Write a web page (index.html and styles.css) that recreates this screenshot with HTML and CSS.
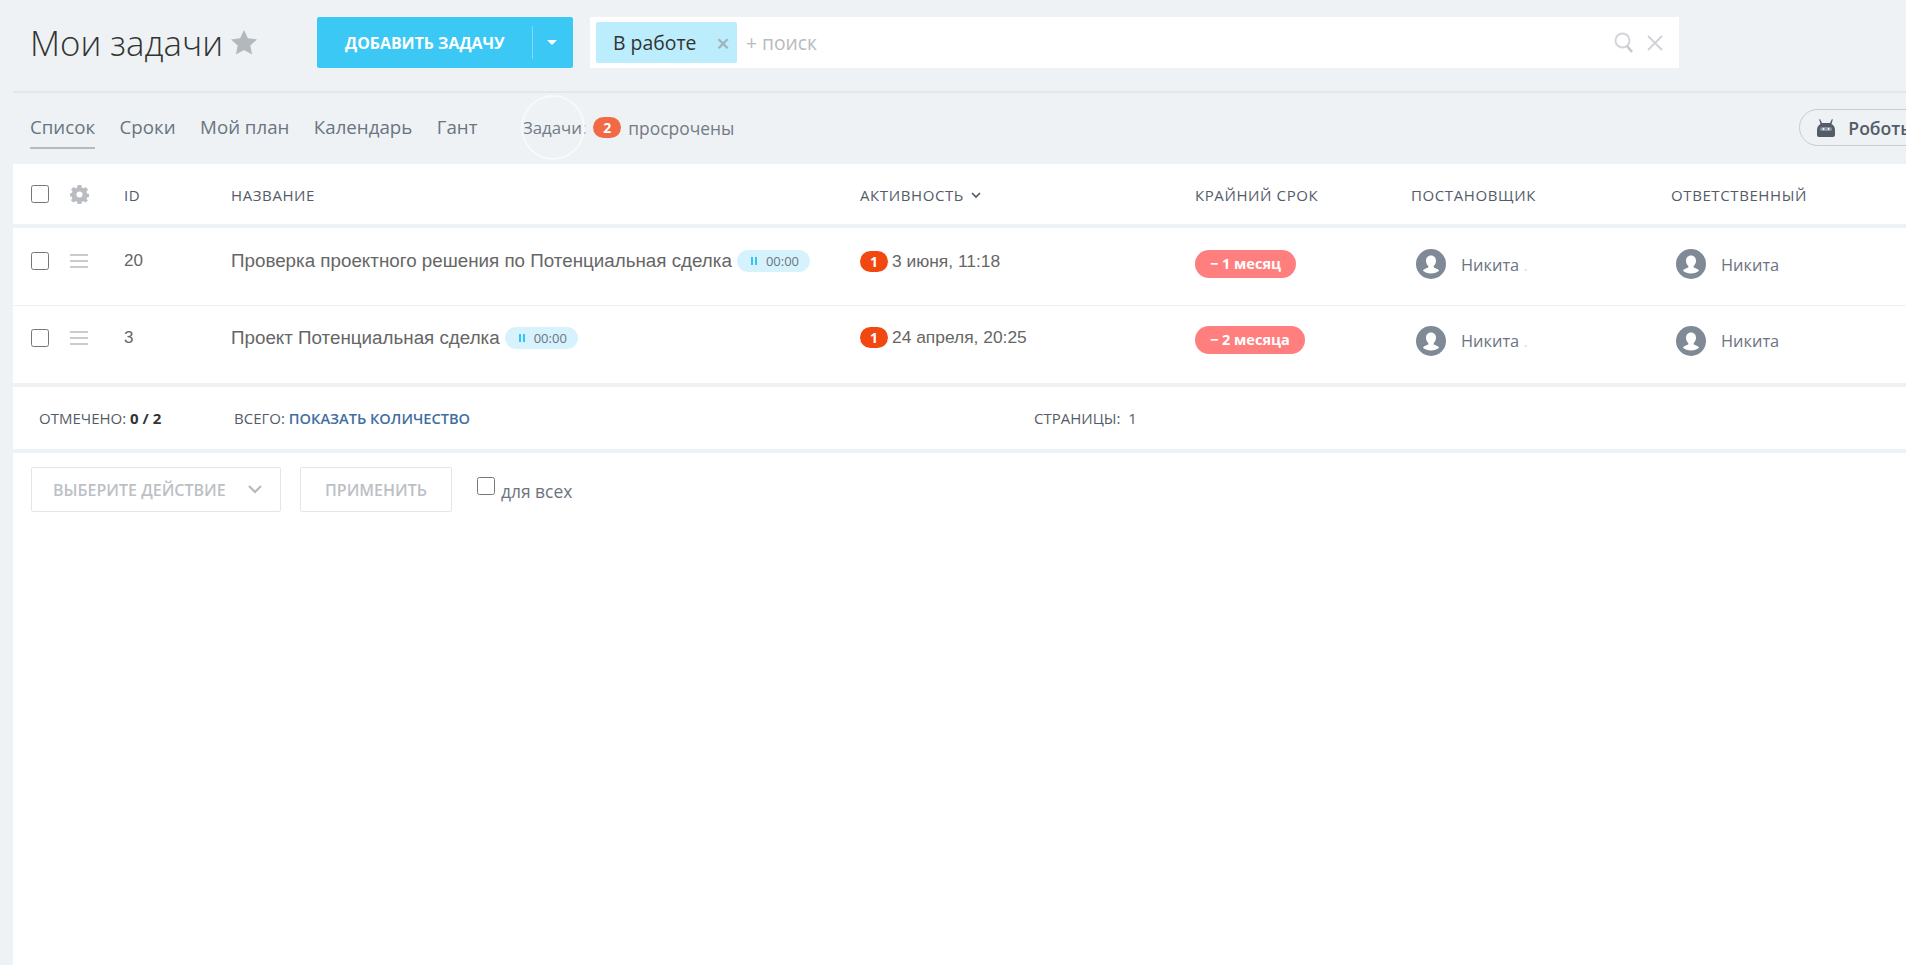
FILE: index.html
```html
<!DOCTYPE html>
<html lang="ru">
<head>
<meta charset="utf-8">
<title>Мои задачи</title>
<link rel="stylesheet" href="styles.css">
</head>
<body>

<svg class="sprite" width="0" height="0">
	<symbol id="i-user" viewBox="0 0 30 30">
		<circle cx="15" cy="15" r="15" fill="#7f8a96"/>
		<path d="M15 6.500c-3.200 0-5 2.300-5 5.300 0 2.200.9 4 2.300 5.200v1.500c-1.500.8-4.600 1.300-5.400 3.300 1.800 1.600 5 2.700 8.100 2.700s6.300-1.100 8.100-2.700c-.8-2-3.900-2.500-5.400-3.300V17c1.400-1.200 2.300-3 2.300-5.200 0-3-1.800-5.300-5-5.300z" fill="#fff"/>
	</symbol>
	<symbol id="i-pause" viewBox="0 0 8 10">
		<rect x="1" y="1" width="2" height="8" fill="#2fc6f6"/>
		<rect x="5" y="1" width="2" height="8" fill="#2fc6f6"/>
	</symbol>
	<symbol id="i-lines" viewBox="0 0 18 14">
		<rect y="0" width="18" height="2" fill="#c9cccf"/>
		<rect y="6" width="18" height="2" fill="#c9cccf"/>
		<rect y="12" width="18" height="2" fill="#c9cccf"/>
	</symbol>
</svg>

<div class="top">
	<h1 class="title">Мои задачи</h1>
	<svg class="star" viewBox="0 0 26 25"><path d="M13 0l3.900 8.300 9.100 1.100-6.700 6.200 1.800 9L13 20.100 4.900 24.600l1.800-9L0 9.400l9.100-1.100z" fill="#b3b8bf"/></svg>
	<div class="add-btn">
		<span class="add-text">ДОБАВИТЬ ЗАДАЧУ</span>
		<span class="add-sep"></span>
		<span class="add-arrow"></span>
	</div>
	<div class="search">
		<div class="chip">В работе <span class="chip-x">×</span></div>
		<span class="search-hint">+ поиск</span>
		<svg class="search-ico" viewBox="0 0 20 22"><circle cx="8.500" cy="8.500" r="7" fill="none" stroke="#d3d5d8" stroke-width="2"/><path d="M13 14l5 6" stroke="#c4c6c9" stroke-width="2.400" fill="none"/></svg>
		<svg class="search-close" viewBox="0 0 16 16"><path d="M1 1l14 14M15 1L1 15" stroke="#cfd2d5" stroke-width="1.800" fill="none"/></svg>
	</div>
</div>

<div class="toolbar">
	<a class="tab tab-on">Список</a>
	<a class="tab">Сроки</a>
	<a class="tab">Мой план</a>
	<a class="tab">Календарь</a>
	<a class="tab">Гант</a>
	<div class="counter">
		<span class="counter-ring"></span>
		<span class="counter-label">Задачи:</span>
		<span class="counter-num">2</span>
		<span>просрочены</span>
	</div>
	<div class="robots">
		<svg class="robots-ico" viewBox="0 0 20 18">
			<path d="M4 0l2 4h8l2-4 .8.5L15.500 5c2 1 3.500 3 3.500 6v5c0 1-.8 2-2 2H3c-1.200 0-2-1-2-2v-5c0-3 1.500-5 3.500-6L3.200.500z" fill="#535c69"/>
			<rect x="4" y="8" width="12" height="4" rx="2" fill="#8a929c"/>
			<circle cx="7.500" cy="10" r="1" fill="#fff"/>
			<circle cx="12.500" cy="10" r="1" fill="#fff"/>
		</svg>
		<span>Роботы</span>
	</div>
</div>

<div class="main">
	<div class="row row-head">
		<div class="c-check"><input type="checkbox"></div>
		<div class="c-handle">
			<svg class="gear" viewBox="0 0 20 20"><path d="M8 0h4l.5 2.800 1.700.7L16.500 2 19 5l-1.700 2.200.6 1.800 2.100.5v3l-2.100.6-.6 1.700L19 16l-2.500 2.500-2.300-1.500-1.700.7L12 20H8l-.5-2.300-1.700-.7-2.300 1.500L1 16l1.400-2.100-.6-1.700L0 12V9l2.100-.5.6-1.800L1 5l2.500-3 2.300 1.500 1.700-.7z" fill="#b9bdc2"/><circle cx="10" cy="10" r="3.200" fill="#fff"/></svg>
		</div>
		<div class="c-id">ID</div>
		<div class="c-name">НАЗВАНИЕ</div>
		<div class="c-act">АКТИВНОСТЬ <svg class="sort" viewBox="0 0 10 7"><path d="M1 1l4 4 4-4" fill="none" stroke="#535c69" stroke-width="1.700"/></svg></div>
		<div class="c-dead">КРАЙНИЙ СРОК</div>
		<div class="c-user">ПОСТАНОВЩИК</div>
		<div class="c-user">ОТВЕТСТВЕННЫЙ</div>
	</div>

	<div class="row task">
		<div class="c-check"><input type="checkbox"></div>
		<div class="c-handle"><svg class="lines"><use href="#i-lines"/></svg></div>
		<div class="c-id">20</div>
		<div class="c-name">Проверка проектного решения по Потенциальная сделка <span class="timer"><svg class="pause"><use href="#i-pause"/></svg>00:00</span></div>
		<div class="c-act"><span class="act-num">1</span>3 июня, 11:18</div>
		<div class="c-dead"><span class="late">− 1 месяц</span></div>
		<div class="c-user"><svg class="ava"><use href="#i-user"/></svg><span class="who">Никита <i>.</i></span></div>
		<div class="c-user"><svg class="ava"><use href="#i-user"/></svg><span class="who">Никита</span></div>
	</div>

	<div class="row task task-last">
		<div class="c-check"><input type="checkbox"></div>
		<div class="c-handle"><svg class="lines"><use href="#i-lines"/></svg></div>
		<div class="c-id">3</div>
		<div class="c-name">Проект Потенциальная сделка <span class="timer"><svg class="pause"><use href="#i-pause"/></svg>00:00</span></div>
		<div class="c-act"><span class="act-num">1</span>24 апреля, 20:25</div>
		<div class="c-dead"><span class="late">− 2 месяца</span></div>
		<div class="c-user"><svg class="ava"><use href="#i-user"/></svg><span class="who">Никита <i>.</i></span></div>
		<div class="c-user"><svg class="ava"><use href="#i-user"/></svg><span class="who">Никита</span></div>
	</div>

	<div class="stat">
		<div class="stat-sel">ОТМЕЧЕНО: <b>0 / 2</b></div>
		<div class="stat-all">ВСЕГО: <a>ПОКАЗАТЬ КОЛИЧЕСТВО</a></div>
		<div>СТРАНИЦЫ:&nbsp; 1</div>
	</div>

	<div class="actions">
		<div class="act-btn act-select">ВЫБЕРИТЕ ДЕЙСТВИЕ
			<svg class="act-chev" viewBox="0 0 14 9"><path d="M1 1l6 6 6-6" fill="none" stroke="#b4b8bd" stroke-width="2"/></svg>
		</div>
		<div class="act-btn act-apply">ПРИМЕНИТЬ</div>
		<label class="for-all"><input type="checkbox"> для всех</label>
	</div>
</div>

</body>
</html>
```

FILE: styles.css
```css
* {
	box-sizing:border-box;
}
html, body {
	height:100%;
	overflow:hidden;
}
body {
	display:flex;
	flex-direction:column;
	margin:0;
	background:#EEF2F4;
	color:#535C69;
	font:16px "Open Sans", "Liberation Sans", sans-serif;
}
.sprite {
	position:absolute;
}

/* top */
.top {
	display:flex;
	flex:none;
	align-items:center;
	height:91px;
	padding:17px 0 23px 30px;
}
.title {
	flex:none;
	width:201px;
	margin:0;
	color:#333;
	font-size:34.800px;
	font-weight:300;
	white-space:nowrap;
}
.star {
	flex:none;
	width:26px;
	height:25px;
}
.add-btn {
	display:flex;
	flex:none;
	align-items:center;
	width:256px;
	height:51px;
	margin-left:60px;
	padding-left:28px;
	border-radius:2px;
	background:#3BC8F5;
	color:#FFF;
}
.add-text {
	flex:none;
	width:162px;
	font-size:15.900px;
	font-weight:700;
	white-space:nowrap;
}
.add-sep {
	flex:none;
	width:1px;
	height:33px;
	margin-left:25px;
	background:#7FDBF8;
}
.add-arrow {
	margin-left:14px;
	border:5px solid transparent;
	border-top-color:#FFF;
	border-bottom:0;
}
.search {
	display:flex;
	flex:none;
	align-items:center;
	width:1089px;
	height:51px;
	margin-left:17px;
	padding:0 16px 0 6px;
	background:#FFF;
}
.chip {
	display:flex;
	flex:none;
	align-items:center;
	justify-content:space-between;
	width:141px;
	height:41px;
	padding:0 7px 0 17px;
	border-radius:2px;
	background:#BCEDFC;
	color:#333;
	font-size:19.400px;
}
.chip-x {
	color:#9DB3BD;
	font-size:24px;
	font-weight:600;
}
.search-hint {
	flex:1;
	margin-left:9px;
	color:#B8BBC0;
	font-size:19.300px;
}
.search-ico {
	width:20px;
	height:22px;
}
.search-close {
	width:16px;
	height:16px;
	margin-left:13px;
}

/* toolbar */
.toolbar {
	display:flex;
	flex:none;
	align-items:center;
	height:73px;
	margin-left:13px;
	padding:0 0 2px 17px;
	border-top:2px solid #E3E7EA;
}
.tab {
	flex:none;
	margin-right:24.500px;
	padding:9px 0 8px;
	border-bottom:2px solid transparent;
	color:#6B7480;
	font-size:18.700px;
	line-height:24px;
	white-space:nowrap;
}
.tab-on {
	border-bottom-color:#B7BBC1;
}
.counter {
	display:flex;
	flex:none;
	position:relative;
	align-items:center;
	gap:7px;
	margin-left:21px;
	color:#737B86;
	font-size:17.400px;
	white-space:nowrap;
}
.counter-label {
	font-size:16.800px;
}
.counter-ring {
	position:absolute;
	top:-21px;
	left:-2px;
	width:64px;
	height:65px;
	border:2px solid #F8F9FA;
	border-radius:50%;
}
.counter-num {
	width:28px;
	height:21px;
	border-radius:11px;
	background:#F26A45;
	color:#FFF;
	font-size:14px;
	font-weight:700;
	line-height:21px;
	text-align:center;
}
.robots {
	display:flex;
	flex:none;
	align-items:center;
	width:160px;
	height:37px;
	margin-left:1065px;
	padding-left:16px;
	border:1px solid #C6CDD3;
	border-radius:19px;
	font-size:17.600px;
	font-weight:600;
}
.robots-ico {
	width:20px;
	height:18px;
	margin-right:12px;
}

/* list */
.main {
	flex:1;
	margin-left:13px;
	background:#FFF;
}
.row {
	display:flex;
	align-items:center;
	padding-left:18px;
}
.row > div {
	flex:none;
	white-space:nowrap;
}
.c-check {
	display:flex;
	width:39px;
}
.c-check input, .for-all input {
	width:18px;
	height:18px;
	margin:0;
}
.c-handle {
	display:flex;
	width:54px;
}
.c-id {
	width:107px;
}
.c-name {
	display:flex;
	align-items:center;
	gap:5px;
	width:629px;
}
.c-act {
	display:flex;
	align-items:center;
	width:335px;
}
.c-dead {
	width:216px;
}
.c-user {
	display:flex;
	align-items:center;
	width:260px;
}
.row-head {
	height:64px;
	padding-top:2px;
	border-bottom:4px solid #EEF2F4;
	font-size:15px;
	font-weight:500;
	letter-spacing:.6px;
}
.row-head .c-check {
	margin-top:-2px;
}
.gear {
	width:19px;
	height:19px;
	margin-top:-2px;
}
.sort {
	width:10px;
	height:7px;
	margin-left:7px;
}
.task {
	height:78px;
	border-bottom:1px solid #EEF2F4;
	padding-bottom:11px;
	color:#666;
	font-family:"Liberation Sans", sans-serif;
}
.task-last {
	height:81px;
	border-bottom:4px solid #EEF2F4;
	padding-bottom:14px;
}
.task .c-id {
	font-size:17px;
}
.task .c-name {
	font-size:18.800px;
}
.task .c-act {
	font-size:17.400px;
}
.task .c-dead {
	margin-top:5px;
}
.task .c-user {
	margin-top:6px;
}
.lines {
	width:18px;
	height:14px;
}
.timer {
	display:inline-flex;
	align-items:center;
	gap:8px;
	height:22px;
	padding:0 11px 0 13px;
	border-radius:11px;
	background:#D6F3FD;
	color:#6B7480;
	font:13px "Open Sans", sans-serif;
}
.pause {
	width:8px;
	height:10px;
}
.act-num {
	width:28px;
	height:21px;
	margin-right:4px;
	border-radius:11px;
	background:#F1480F;
	color:#FFF;
	font:700 14px/21px "Open Sans", sans-serif;
	text-align:center;
}
.late {
	display:inline-block;
	height:28px;
	padding:0 15px;
	border-radius:14px;
	background:#FF7F7F;
	color:#FFF;
	font:700 14.500px/28px "Open Sans", sans-serif;
}
.ava {
	width:30px;
	height:30px;
	margin:0 15px 0 5px;
}
.who {
	color:#6B7480;
	font:16.400px "Open Sans", sans-serif;
}
.who i {
	color:#DDD;
	font-style:normal;
}

/* footer */
.stat {
	display:flex;
	align-items:center;
	height:66px;
	padding-left:26px;
	border-bottom:4px solid #EEF2F4;
	font-size:15px;
}
.stat b {
	color:#333;
}
.stat a {
	color:#3F6EA0;
	font-size:14.600px;
	font-weight:600;
}
.stat-sel {
	width:195px;
}
.stat-all {
	width:800px;
}
.actions {
	display:flex;
	align-items:center;
	margin:14px 0 0 18px;
}
.act-btn {
	display:flex;
	align-items:center;
	height:45px;
	border:1px solid #E4E6E9;
	border-radius:2px;
	color:#BCC0C6;
	font-size:16px;
	font-weight:600;
}
.act-select {
	justify-content:space-between;
	width:250px;
	margin-right:19px;
	padding:0 18px 0 21px;
}
.act-apply {
	justify-content:center;
	width:152px;
}
.act-chev {
	width:14px;
	height:9px;
}
.for-all {
	display:flex;
	align-items:flex-start;
	gap:6px;
	margin:2px 0 0 25px;
	color:#6B7480;
	font-size:17.400px;
}
.for-all input {
	margin-top:-2px;
}
```
